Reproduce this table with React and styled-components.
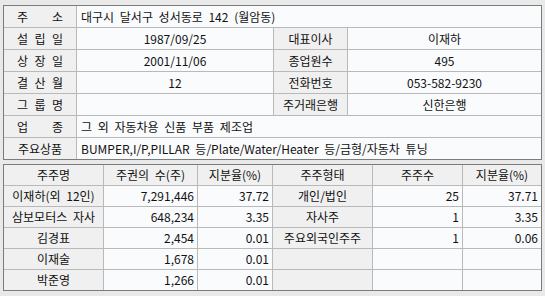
import React from 'react';
import styled, { createGlobalStyle } from 'styled-components';

const GlobalStyle = createGlobalStyle`
  body {
    margin: 0;
    background: #e9e9e9;
    font-family: "Noto Sans CJK KR", "Noto Sans", sans-serif;
    font-size: 12px;
    color: #111;
    word-spacing: 3px;
  }
`;

const Page = styled.div`
  display: flex;
  flex-direction: column;
  gap: 4px;
  width: 539px;
  padding: 5px 3px 0;
`;

const Frame = styled.div`
  display: grid;
  grid-template-columns: ${p => p.$cols};
  grid-auto-rows: ${p => p.$row}px;
  gap: 1px;
  border: 1px solid #7c7c7c;
  background: #b9b9b9;
`;

const Cell = styled.div`
  grid-column: span ${p => p.$span || 1};
  padding: 0 ${p => (p.$align === 'right' ? '3px' : '4px')};
  background: ${p => (p.$label ? '#f0f0f0' : '#fafbfd')};
  text-align: ${p => p.$align || 'center'};
  line-height: ${p => (p.$short ? 20 : 21)}px;
  white-space: nowrap;
  overflow: hidden;
`;

const SpreadLabel = styled(Cell)`
  padding: 0 13px;
  text-align: justify;
  text-align-last: justify;
`;

const info = [
  { label: '주 소', spread: true, wide: '대구시 달서구 성서동로 142 (월암동)' },
  { label: '설 립 일', spread: true, value: '1987/09/25', label2: '대표이사', value2: '이재하' },
  { label: '상 장 일', spread: true, value: '2001/11/06', label2: '종업원수', value2: '495' },
  { label: '결 산 월', spread: true, value: '12', label2: '전화번호', value2: '053-582-9230' },
  { label: '그 룹 명', spread: true, value: '', label2: '주거래은행', value2: '신한은행' },
  { label: '업 종', spread: true, wide: '그 외 자동차용 신품 부품 제조업' },
  { label: '주요상품', wide: 'BUMPER,I/P,PILLAR 등/Plate/Water/Heater 등/금형/자동차 튜닝' },
];

const holderHeads = ['주주명', '주권의 수(주)', '지분율(%)', '주주형태', '주주수', '지분율(%)'];

const holders = [
  ['이재하(외 12인)', '7,291,446', '37.72', '개인/법인', '25', '37.71'],
  ['삼보모터스 자사', '648,234', '3.35', '자사주', '1', '3.35'],
  ['김경표', '2,454', '0.01', '주요외국인주주', '1', '0.06'],
  ['이재술', '1,678', '0.01', '', '', ''],
  ['박준영', '1,266', '0.01', '', '', ''],
];

const InfoTable = () => (
  <Frame $cols="72px 196px 73px 193px" $row={21}>
    {info.map(row => (
      <React.Fragment key={row.label}>
        {row.spread ? (
          <SpreadLabel $label>{row.label}</SpreadLabel>
        ) : (
          <Cell $label>{row.label}</Cell>
        )}
        {row.wide !== undefined ? (
          <Cell $span={3} $align="left">{row.wide}</Cell>
        ) : (
          <>
            <Cell>{row.value}</Cell>
            <Cell $label>{row.label2}</Cell>
            <Cell>{row.value2}</Cell>
          </>
        )}
      </React.Fragment>
    ))}
  </Frame>
);

const HolderTable = () => (
  <Frame $cols="99px 93px 74px 99px 89px 78px" $row={20}>
    {holderHeads.map((h, i) => (
      <Cell key={i} $label $short>{h}</Cell>
    ))}
    {holders.map(([name, shares, pct, kind, count, pct2]) => (
      <React.Fragment key={name}>
        <Cell $label $short>{name}</Cell>
        <Cell $short $align="right">{shares}</Cell>
        <Cell $short $align="right">{pct}</Cell>
        <Cell $label $short>{kind}</Cell>
        <Cell $short $align="right">{count}</Cell>
        <Cell $short $align="right">{pct2}</Cell>
      </React.Fragment>
    ))}
  </Frame>
);

export default function App() {
  return (
    <>
      <GlobalStyle />
      <Page>
        <InfoTable />
        <HolderTable />
      </Page>
    </>
  );
}
